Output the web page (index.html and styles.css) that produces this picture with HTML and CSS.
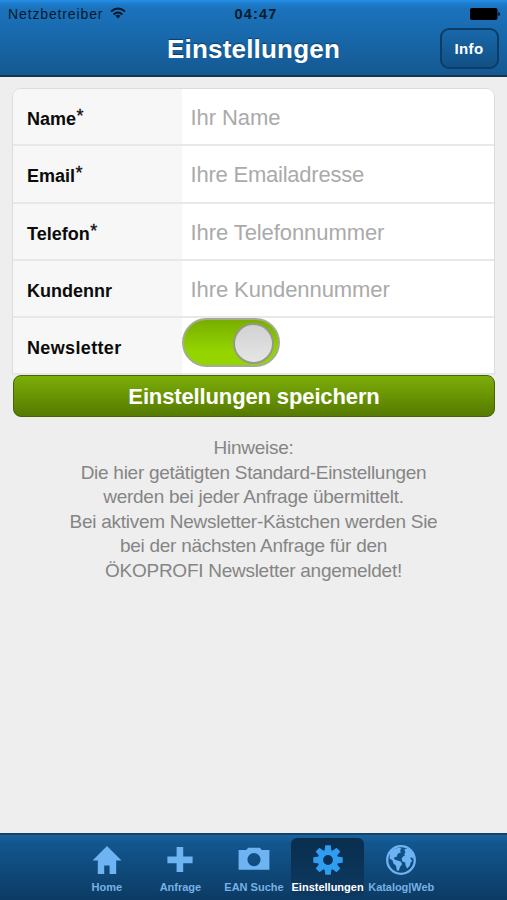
FILE: index.html
```html
<!DOCTYPE html>
<html lang="de">
<head>
<meta charset="utf-8">
<title>Einstellungen</title>
<link rel="stylesheet" href="styles.css">
</head>
<body>
<header class="top">
  <div class="status">
    <div class="carrier"><span class="carrier-name">Netzbetreiber</span>
      <svg class="wifi" width="16" height="12" viewBox="0 0 16 12"><g fill="none" stroke="#061a2c" stroke-width="2"><path d="M1 4.6Q8-1.6 15 4.6"/><path d="M3.6 7.4Q8 3.5 12.4 7.4"/></g><path d="M5.4 8.8Q8 6.9 10.6 8.8L8 11.6z" fill="#061a2c"/></svg>
    </div>
    <span class="clock">04:47</span>
    <svg class="battery" width="31" height="12" viewBox="0 0 31 12"><rect width="27.5" height="12" rx="2"/><path d="M28.4 4q1.6.3 1.6 2t-1.6 2z"/></svg>
  </div>
  <div class="titlebar">
    <h1 class="title">Einstellungen</h1>
    <button class="info">Info</button>
  </div>
</header>
<main class="content">
  <form class="form">
    <div class="row"><label class="label">Name<span class="star">*</span></label><input class="field" placeholder="Ihr Name"></div>
    <div class="row"><label class="label">Email<span class="star">*</span></label><input class="field email" placeholder="Ihre Emailadresse"></div>
    <div class="row"><label class="label">Telefon<span class="star">*</span></label><input class="field" placeholder="Ihre Telefonnummer"></div>
    <div class="row"><label class="label">Kundennr</label><input class="field" placeholder="Ihre Kundennummer"></div>
    <div class="row"><label class="label newsletter">Newsletter</label><div class="toggle"><span class="knob"></span></div></div>
  </form>
  <button class="save">Einstellungen speichern</button>
  <p class="notes">Hinweise:<br>Die hier getätigten Standard-Einstellungen<br>werden bei jeder Anfrage übermittelt.<br>Bei aktivem Newsletter-Kästchen werden Sie<br>bei der nächsten Anfrage für den<br>ÖKOPROFI Newsletter angemeldet!</p>
</main>
<nav class="tabs">
  <a class="tab"><svg class="icon" viewBox="0 0 32 32"><path d="M16 2L1.5 16.5H6.8V30H13.2V21.5H18.6V30H25.2V16.5H30.5z"/></svg><span class="tab-name">Home</span></a>
  <a class="tab"><svg class="icon" viewBox="0 0 32 32"><path d="M12.6 3h6.6v9.5H28.6v6.7H19.2V28h-6.6v-8.8H3.4v-6.7h9.2z"/></svg><span class="tab-name">Anfrage</span></a>
  <a class="tab"><svg class="icon" viewBox="0 0 32 32"><path fill-rule="evenodd" d="M.6 6h7.6l2-2.2h11.6l2 2.2h7.6V25.8H.6zM16 9a6.6 6.6 0 1 0 0 13.2a6.6 6.6 0 1 0 0-13.2z"/></svg><span class="tab-name">EAN Suche</span></a>
  <a class="tab active"><svg class="icon" viewBox="-16 -16 32 32"><defs><path id="tooth" d="M-3.5-8.5L-2.7-14.7h5.4L3.5-8.5z"/></defs><circle r="7.6" fill="none" stroke="#2f9df0" stroke-width="5.4"/><use href="#tooth"/><use href="#tooth" transform="rotate(45)"/><use href="#tooth" transform="rotate(90)"/><use href="#tooth" transform="rotate(135)"/><use href="#tooth" transform="rotate(180)"/><use href="#tooth" transform="rotate(225)"/><use href="#tooth" transform="rotate(270)"/><use href="#tooth" transform="rotate(315)"/></svg><span class="tab-name">Einstellungen</span></a>
  <a class="tab"><svg class="icon" viewBox="0 0 32 32"><circle cx="16" cy="16" r="13.8" fill="none" stroke="#6eb4f3" stroke-width="2.3"/><path d="M5 8.5L9 5l5-1.6 2.6 1.4-1.8 1.6 1.2 1.8-3.2 1.6-1.2 3-2.6.8.4 2 2.4.6 3.8 1.4 1.6 2.4-2.2 3-1.2 3.8-2-.4-.8-4.6-2.6-2.4-.8-2.8-3-2.2zM19.4 5.2l3.6-.4 4.4 4.2 1.6 6-2.4-1.4-1.4-.2.8 2.2 1.2.8-1.6 2.4-.8 3-2.6 2.8-1.6-3-.4-3-2.8-1-.8-3 2-2.6 1.6-.4-1-1.6 1.2-1.6z"/></svg><span class="tab-name web">Katalog|Web</span></a>
</nav>
</body>
</html>
```

FILE: styles.css
```css
* { box-sizing: border-box; }
body { margin: 0; height: 900px; display: flex; flex-direction: column; background: #eee; font-family: "Liberation Sans", Arial, sans-serif; overflow: hidden; }
.top { height: 77px; background: linear-gradient(#2590e8 0, #1c7bcb 4px, #1b73bd 8px, #145992 75px); border-bottom: 2px solid #17344d; }
.status { height: 27px; display: grid; grid-template-columns: 1fr auto 1fr; align-items: center; padding: 1px 6px 0 8px; color: #061a2c; }
.carrier { display: flex; align-items: center; gap: 7px; font-size: 14px; }
.carrier-name { letter-spacing: .87px; }
.wifi { margin-top: -2px; }
.clock { font-size: 14.5px; font-weight: bold; letter-spacing: 1.2px; margin-left: 3px; }
.battery { justify-self: end; }
.titlebar { display: grid; grid-template-columns: 68px 1fr 68px; align-items: center; height: 42px; }
.title { grid-column: 2; margin: 1px 0 0; font-size: 26px; letter-spacing: .2px; line-height: 42px; text-align: center; color: #fff; text-shadow: 0 -1px 1px #0c3f69; }
.info { width: 59px; height: 41px; border: 2px solid #0b3d68; border-radius: 9px; background: linear-gradient(#1968aa, #125084); color: #fff; font: bold 15px "Liberation Sans", sans-serif; letter-spacing: .4px; padding: 0 0 1px; margin-left: .5px; }
.content { flex: 1; padding: 11px 12px 0; }
.form { border: 1px solid #dcdcdc; border-bottom: 0; border-radius: 9px 9px 0 0; overflow: hidden; background: #fff; }
.row { display: flex; height: 57.3px; border-bottom: 2px solid #e8e8e8; }
.label { width: 169px; padding: 4px 0 0 14px; line-height: 53px; background: #f7f7f7; font-size: 18px; font-weight: bold; color: #0b0b0b; }
.newsletter { letter-spacing: .35px; }
.star { position: relative; top: -3px; left: .5px; font-weight: normal; -webkit-text-stroke: .3px #0b0b0b; }
.field { flex: 1; min-width: 0; border: 0; padding: 3px 8.5px 0; background: #fff; font: 22px "Liberation Sans", sans-serif; letter-spacing: -.08px; }
.email { letter-spacing: -.22px; }
.field::placeholder { color: #aaa; }
.toggle { width: 98px; height: 49px; border: 2px solid #a5ac95; border-radius: 25px; background: linear-gradient(#78ae00, #94d500 70%); padding: 3px 4px; display: flex; justify-content: flex-end; }
.knob { width: 41px; height: 41px; border: 2px solid #939a86; border-radius: 50%; background: linear-gradient(#d2d2d2, #e5e5e5); }
.save { display: block; width: 482px; height: 42px; margin: 0 0 0 1px; padding: 1px 0 0; border: 1.5px solid #466407; border-radius: 8px; background: linear-gradient(#7cae08, #557a00); color: #fff; font: bold 22px "Liberation Sans", sans-serif; letter-spacing: -.13px; }
.notes { margin: 19px 0 0; font-size: 19px; letter-spacing: -.27px; line-height: 24.4px; text-align: center; color: #858585; }
.tabs { height: 67px; display: flex; justify-content: center; background: linear-gradient(#1a639e, #12568f 8px, #0c3b64); border-top: 2px solid #14436c; padding: 3px 0 3px 1px; }
.tab { width: 73.6px; height: 59px; display: flex; flex-direction: column; align-items: center; border-radius: 6px; padding-top: 6px; fill: #6eb4f3; color: #78b1e4; }
.active { background: linear-gradient(#092e4e, #0d3961); fill: #2f9df0; color: #fff; }
.icon { width: 32px; height: 32px; flex: none; }
.tab-name { margin-top: 4px; font-size: 11px; line-height: 14px; font-weight: bold; white-space: nowrap; }
.web { letter-spacing: -.05px; }
```
